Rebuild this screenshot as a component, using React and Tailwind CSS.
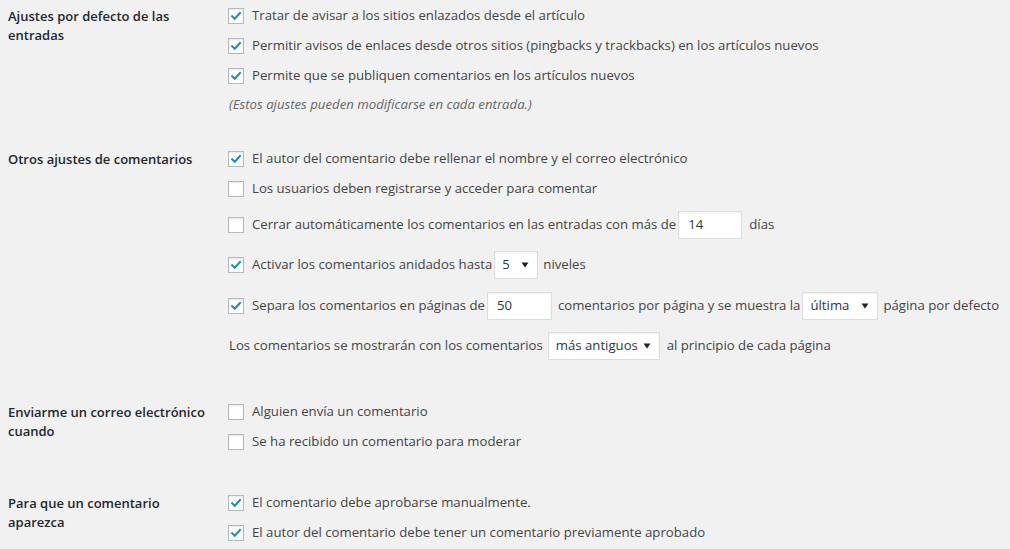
import React from 'react';

// casilla estilo WordPress
const Check = ({ checked }) => (
  <span className="mr-2 flex h-4 w-4 shrink-0 items-center justify-center border border-[#b4b9be] bg-white shadow-[inset_0_1px_2px_rgba(0,0,0,0.1)]">
    {checked && (
      <svg viewBox="0 0 16 16" className="h-4 w-4">
        <path d="M3.6 8.2 L6.6 11.2 L12.6 4.6" fill="none" stroke="#1e8cbe" strokeWidth="2.3" strokeLinecap="square" />
      </svg>
    )}
  </span>
);

const Row = ({ checked, h = 'h-[30px]', children }) => (
  <div className={`flex items-center whitespace-nowrap ${h}`}>
    {checked !== undefined && <Check checked={checked} />}
    {children}
  </div>
);

const TextBox = ({ value, className }) => (
  <span className={`flex h-[28px] items-center border border-[#ddd] bg-white pl-[9px] text-[#32373c] shadow-[inset_0_1px_2px_rgba(0,0,0,0.07)] ${className}`}>
    {value}
  </span>
);

const Select = ({ value, className }) => (
  <span className={`flex h-[28px] items-center justify-between border border-[#ddd] bg-white pl-[7px] pr-[8px] text-[#32373c] shadow-[inset_0_1px_2px_rgba(0,0,0,0.07)] ${className}`}>
    {value}
    <svg viewBox="0 0 8 6" className="h-[6px] w-[8px]">
      <path d="M0.5 0.5 H7.5 L4 5.5 Z" fill="#222" />
    </svg>
  </span>
);

const Section = ({ title, className = '', children }) => (
  <div className={`flex ${className}`}>
    <div className="w-[228px] shrink-0 pl-2 pr-[14px] pt-[6px] text-[13px] font-semibold leading-[19px] text-[#23282d]">{title}</div>
    <div className="flex flex-col">{children}</div>
  </div>
);

export default function App() {
  return (
    <div className="min-h-[549px] w-[1010px] overflow-hidden bg-[#f1f1f1] pt-px text-[13.2px] text-[#444] [font-family:'Open_Sans',sans-serif]">
      <Section title="Ajustes por defecto de las entradas">
        <Row checked>Tratar de avisar a los sitios enlazados desde el artículo</Row>
        <Row checked>Permitir avisos de enlaces desde otros sitios (pingbacks y trackbacks) en los artículos nuevos</Row>
        <Row checked>Permite que se publiquen comentarios en los artículos nuevos</Row>
        <Row h="h-[28px]">
          <span className="pl-px italic text-[#666]">(Estos ajustes pueden modificarse en cada entrada.)</span>
        </Row>
      </Section>

      <Section title="Otros ajustes de comentarios" className="mt-[25px]">
        <Row checked>El autor del comentario debe rellenar el nombre y el correo electrónico</Row>
        <Row checked={false}>Los usuarios deben registrarse y acceder para comentar</Row>
        <Row checked={false} h="h-[41px]">
          Cerrar automáticamente los comentarios en las entradas con más de
          <TextBox value="14" className="ml-[2px] mr-[7px] w-[64px]" />
          días
        </Row>
        <Row checked h="h-[40px]">
          Activar los comentarios anidados hasta
          <Select value="5" className="ml-[2px] mr-[5px] w-[44px]" />
          niveles
        </Row>
        <Row checked h="h-[41px]">
          Separa los comentarios en páginas de
          <TextBox value="50" className="ml-[2px] mr-[6px] w-[65px]" />
          comentarios por página y se muestra la
          <Select value="última" className="ml-[2px] mr-[5px] w-[76px]" />
          página por defecto
        </Row>
        <Row h="h-[40px]">
          <span className="pl-px">Los comentarios se mostrarán con los comentarios</span>
          <Select value="más antiguos" className="ml-[5px] mr-[7px] w-[112px]" />
          al principio de cada página
        </Row>
      </Section>

      <Section title="Enviarme un correo electrónico cuando" className="mt-[31px]">
        <Row checked={false}>Alguien envía un comentario</Row>
        <Row checked={false}>Se ha recibido un comentario para moderar</Row>
      </Section>

      <Section title="Para que un comentario aparezca" className="mt-[31px]">
        <Row checked>El comentario debe aprobarse manualmente.</Row>
        <Row checked>El autor del comentario debe tener un comentario previamente aprobado</Row>
      </Section>
    </div>
  );
}
